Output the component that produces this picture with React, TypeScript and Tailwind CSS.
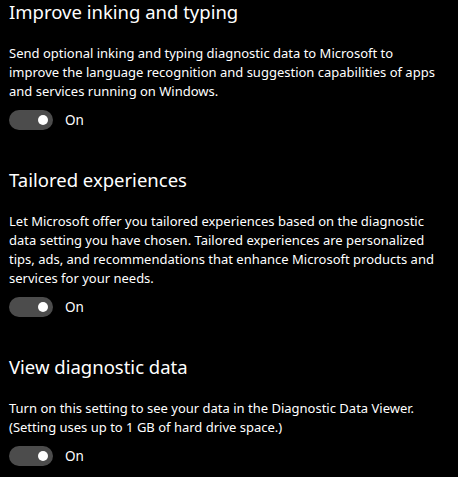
import React from 'react';

const Toggle = () => (
  <div className="flex items-center">
    <div className="w-[44px] h-[20px] rounded-full bg-[#4c4c4c] flex items-center justify-end pr-[5px]">
      <div className="w-[10px] h-[10px] rounded-full bg-white" />
    </div>
    <span className="ml-[12px] text-[13.5px] text-white leading-[20px]">On</span>
  </div>
);

const sections = [
  {
    title: 'Improve inking and typing',
    text: 'Send optional inking and typing diagnostic data to Microsoft to improve the language recognition and suggestion capabilities of apps and services running on Windows.',
  },
  {
    title: 'Tailored experiences',
    text: 'Let Microsoft offer you tailored experiences based on the diagnostic data setting you have chosen. Tailored experiences are personalized tips, ads, and recommendations that enhance Microsoft products and services for your needs.',
  },
  {
    title: 'View diagnostic data',
    text: 'Turn on this setting to see your data in the Diagnostic Data Viewer. (Setting uses up to 1 GB of hard drive space.)',
  },
];

export default function App() {
  return (
    <div
      className="w-[458px] h-[477px] bg-black text-white overflow-hidden pl-[9px] pr-[20px]"
      style={{ fontFamily: '"Noto Sans", "Open Sans", sans-serif' }}
    >
      <div className="flex flex-col gap-[36px] -mt-[2px]">
        {sections.map((s) => (
          <div key={s.title} className="flex flex-col">
            <h2 className="text-[18.5px] leading-[28px] font-normal">{s.title}</h2>
            <p className="mt-[18px] text-[13px] leading-[19px]">{s.text}</p>
            <div className="mt-[9px]">
              <Toggle />
            </div>
          </div>
        ))}
      </div>
    </div>
  );
}
